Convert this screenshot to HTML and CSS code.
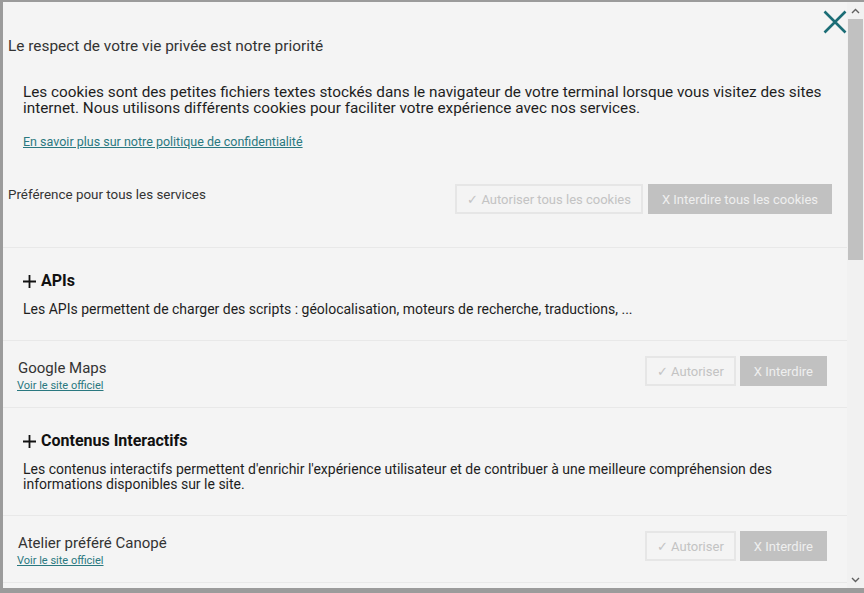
FILE: index.html
```html
<!DOCTYPE html>
<html lang="fr">
<head>
  <meta charset="utf-8" />
  <title>Gestion des cookies</title>
  <link rel="stylesheet" href="styles.css">
</head>
<body>

  <div class="panel">
    <div class="panel-body">

      <div class="close-row">
        <button class="close" aria-label="Fermer">
          <svg width="24" height="24" viewBox="0 0 24 24"><path d="M1.5 1.5 L22.5 22.5 M22.5 1.5 L1.5 22.5" stroke="#1b6d76" stroke-width="2.6" fill="none"/></svg>
        </button>
      </div>

      <div class="intro">
        <h1 class="title">Le respect de votre vie privée est notre priorité</h1>
        <p class="lead">Les cookies sont des petites fichiers textes stockés dans le navigateur de votre terminal lorsque vous visitez des sites internet. Nous utilisons différents cookies pour faciliter votre expérience avec nos services.</p>
        <a class="policy" href="#">En savoir plus sur notre politique de confidentialité</a>
      </div>

      <div class="all-row">
        <span class="all-label">Préférence pour tous les services</span>
        <div class="actions">
          <button class="btn allow">✓ Autoriser tous les cookies</button>
          <button class="btn deny">X Interdire tous les cookies</button>
        </div>
      </div>

      <div class="category">
        <h2 class="cat-title">
          <svg class="plus" width="13" height="13" viewBox="0 0 13 13"><path d="M6.5 0 V13 M0 6.5 H13" stroke="#111" stroke-width="1.8" fill="none"/></svg>
          APIs
        </h2>
        <p class="cat-text">Les APIs permettent de charger des scripts : géolocalisation, moteurs de recherche, traductions, ...</p>
      </div>

      <div class="service">
        <div class="service-info">
          <span class="service-name">Google Maps</span>
          <a class="service-link" href="#">Voir le site officiel</a>
        </div>
        <div class="actions small">
          <button class="btn allow">✓ Autoriser</button>
          <button class="btn deny">X Interdire</button>
        </div>
      </div>

      <div class="category">
        <h2 class="cat-title">
          <svg class="plus" width="13" height="13" viewBox="0 0 13 13"><path d="M6.5 0 V13 M0 6.5 H13" stroke="#111" stroke-width="1.8" fill="none"/></svg>
          Contenus Interactifs
        </h2>
        <p class="cat-text">Les contenus interactifs permettent d'enrichir l'expérience utilisateur et de contribuer à une meilleure compréhension des informations disponibles sur le site.</p>
      </div>

      <div class="service">
        <div class="service-info">
          <span class="service-name">Atelier préféré Canopé</span>
          <a class="service-link" href="#">Voir le site officiel</a>
        </div>
        <div class="actions small">
          <button class="btn allow">✓ Autoriser</button>
          <button class="btn deny">X Interdire</button>
        </div>
      </div>

    </div>

    <div class="scrollbar">
      <span class="arrow">
        <svg width="9" height="6" viewBox="0 0 9 6"><path d="M1 5 L4.5 1.5 L8 5" stroke="#606060" stroke-width="1.4" fill="none"/></svg>
      </span>
      <div class="track"><div class="thumb"></div></div>
      <span class="arrow">
        <svg width="9" height="6" viewBox="0 0 9 6"><path d="M1 1 L4.5 4.5 L8 1" stroke="#606060" stroke-width="1.4" fill="none"/></svg>
      </span>
    </div>
  </div>

</body>
</html>
```

FILE: styles.css
```css
body {
  margin: 0;
  height: 593px;
  overflow: hidden;
  background: #9b9b9b;
  font-family: Roboto, "Liberation Sans", sans-serif;
  color: #333;
}

.panel {
  display: flex;
  height: 586px;
  margin: 2px 0 0 3px;
  background: #f4f4f4;
  overflow: hidden;
}

.panel-body {
  flex: 1;
  min-width: 0;
}

/* close button */
.close-row {
  display: flex;
  justify-content: flex-end;
  padding-top: 8px;
}

.close {
  border: 0;
  background: none;
  padding: 0;
  width: 24px;
  height: 24px;
  display: block;
  cursor: pointer;
}

.intro {
  padding: 2px 0 0 5px;
}

.title {
  margin: 0;
  font-size: 15.4px;
  font-weight: 400;
  line-height: 20px;
  color: #333;
}

.lead {
  margin: 28px 0 0 15px;
  font-size: 15.3px;
  line-height: 16px;
  color: #1e1e1e;
  padding-right: 10px;
}

.policy {
  display: inline-block;
  margin: 18px 0 0 15px;
  font-size: 12.5px;
  line-height: 16px;
  color: #2a7880;
}

.all-row {
  display: flex;
  justify-content: space-between;
  align-items: flex-start;
  padding: 34px 15px 33px 5px;
  border-bottom: 1px solid #e8e8e8;
}

.all-label {
  font-size: 13.4px;
  line-height: 22px;
  color: #333;
}

.actions {
  display: flex;
  gap: 5px;
}

.actions.small {
  gap: 4px;
}

.btn {
  font-family: Roboto, "Liberation Sans", sans-serif;
  font-size: 13px;
  height: 30px;
  padding: 0 10px;
  border: 2px solid #e6e6e6;
  background: none;
  color: #c3c3c3;
  cursor: pointer;
}

.btn.deny {
  padding: 0 12px;
  background: #c1c1c1;
  border-color: #c1c1c1;
  color: #efefef;
}

.category {
  padding: 23px 20px 23px 20px;
  border-bottom: 1px solid #e8e8e8;
}

.cat-title {
  display: flex;
  align-items: center;
  gap: 5px;
  margin: 0;
  font-size: 16px;
  font-weight: 700;
  line-height: 20px;
  color: #111;
}

.cat-text {
  margin: 11px 0 0;
  font-size: 14px;
  line-height: 15px;
  color: #1e1e1e;
  padding-right: 40px;
}

.service {
  display: flex;
  justify-content: space-between;
  align-items: flex-start;
  height: 51px;
  padding: 15px 20px 0 15px;
  border-bottom: 1px solid #e8e8e8;
}

.service-info {
  display: flex;
  flex-direction: column;
  align-items: flex-start;
  padding-top: 3px;
}

.service-name {
  font-size: 15px;
  line-height: 18px;
  color: #333;
}

.service-link {
  font-size: 11px;
  line-height: 14px;
  margin: 2px 0 0 -1px;
  color: #2a7880;
}

/* scrollbar */
.scrollbar {
  width: 17px;
  flex-shrink: 0;
  display: flex;
  flex-direction: column;
  background: #f1f1f1;
}

.arrow {
  height: 17px;
  display: flex;
  align-items: center;
  justify-content: center;
}

.track {
  flex: 1;
  padding: 0 1px;
}

.thumb {
  height: 241px;
  background: #c1c1c1;
}
```
